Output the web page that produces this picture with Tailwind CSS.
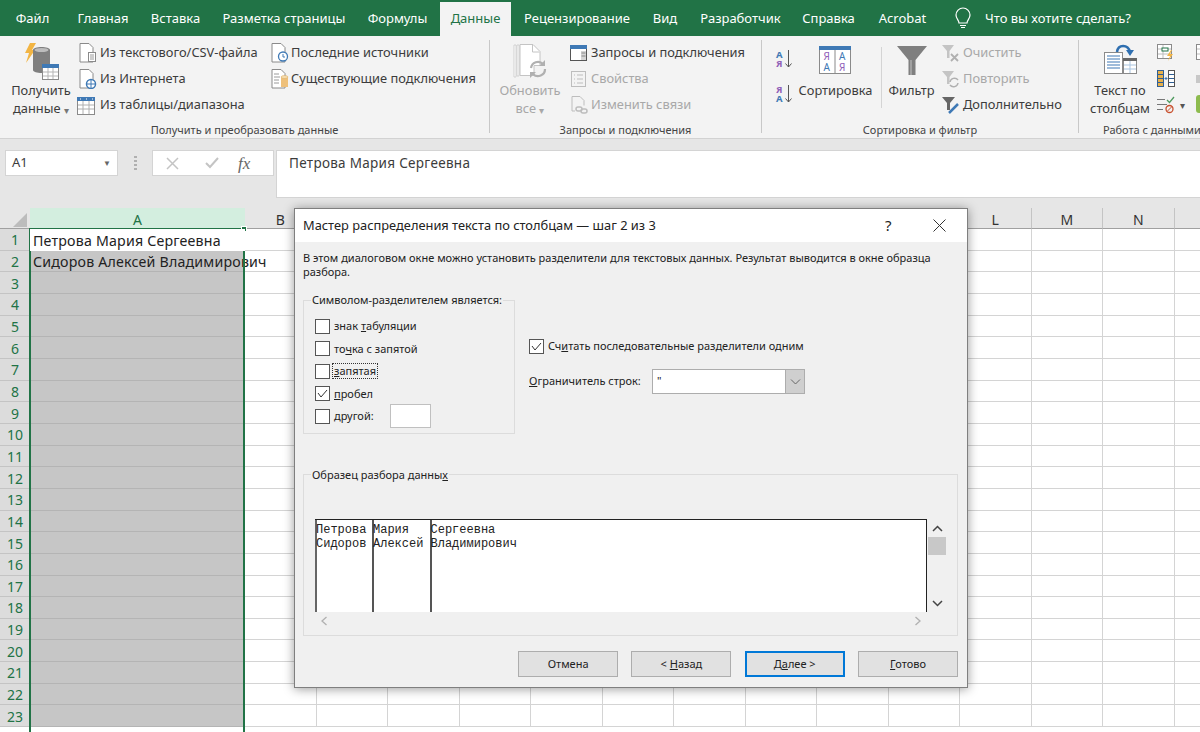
<!DOCTYPE html>
<html lang="ru">
<head>
  <meta charset="UTF-8">
  <title>Excel - Мастер распределения текста</title>
  <script src="https://cdn.jsdelivr.net/npm/@tailwindcss/browser@4"></script>
</head>
<body class="bg-white">
<div class="relative w-[1200px] h-[732px] overflow-hidden bg-white text-[#3c3c3c] [font-family:'Noto_Sans',sans-serif]">

  <!-- Вкладки -->
  <div class="flex h-[36px] pt-[2px] bg-[#217346] text-white text-[13px] items-center">
    <div class="w-[65px] text-center">Файл</div>
    <div class="w-[76px] text-center">Главная</div>
    <div class="w-[69px] text-center">Вставка</div>
    <div class="w-[148px] text-center">Разметка страницы</div>
    <div class="w-[79px] text-center">Формулы</div>
    <div class="ml-[3px] w-[71px] h-[34px] bg-[#f3f3f3] text-[#217346] flex items-center justify-center">Данные</div>
    <div class="w-[132px] text-center">Рецензирование</div>
    <div class="w-[44px] text-center">Вид</div>
    <div class="w-[107px] text-center">Разработчик</div>
    <div class="w-[69px] text-center">Справка</div>
    <div class="w-[79px] text-center">Acrobat</div>
    <svg class="ml-[12px] -mt-[2px] w-[18px] h-[22px]" viewBox="954 6 18 22" fill="none" stroke="#fff" stroke-width="1.2"><path d="M959 22c0-3-3-4-3-8a7 7 0 0 1 14 0c0 4-3 5-3 8z"/><path d="M960 24.500h6M961 26.500h4"/></svg>
    <div class="ml-[13px]">Что вы хотите сделать?</div>
  </div>

  <!-- Лента -->
  <div class="flex h-[103px] bg-[#f3f3f3] border-b border-[#d2d2d2] text-[12.850px] whitespace-nowrap">
    <div class="w-[489px] shrink-0 flex flex-col">
      <div class="flex h-[80px] pt-[4px] box-content">
        <div class="w-[79px] flex flex-col items-center pl-[3px]">
          <svg class="w-[42px] h-[40px] mt-[2px]" viewBox="20 42 42 40">
            <path d="M30 43h6l-4 7h3l-9 13 3-10h-4z" fill="#f2b544"/>
            <path d="M33 50c0-4 17-4 17 0v20c0 4-17 4-17 0z" fill="#7f7f7f"/>
            <ellipse cx="41.500" cy="50" rx="7" ry="2" fill="#bdbdbd"/>
            <rect x="42.500" y="64.500" width="16" height="15" fill="#fff" stroke="#8a8a8a"/>
            <rect x="42" y="64" width="17" height="4" fill="#3f79b5"/>
            <path d="M43 72h15M43 76h15M48 68v11M53 68v11" stroke="#b5b5b5"/>
          </svg>
          <div class="-mt-[1px] leading-[18px] text-center">Получить<br>данные <span class="text-[10px] align-middle text-[#777]">▾</span></div>
        </div>
        <div class="w-[192px] shrink-0">
          <div class="h-[26px] flex items-center">
            <svg class="w-[18px] h-[20px]" viewBox="79 43 18 20" fill="none"><path d="M80 43.500h9l4 4v14.500h-13z" fill="#fff" stroke="#8a8a8a"/><rect x="88.500" y="52.500" width="7" height="9" fill="#fff" stroke="#8a8a8a"/><path d="M90 55h4M90 57h4M90 59h4" stroke="#9a9a9a"/></svg>
            <span class="ml-[3px]">Из текстового/CSV-файла</span>
          </div>
          <div class="h-[26px] flex items-center">
            <svg class="w-[18px] h-[20px]" viewBox="79 69 18 20" fill="none"><path d="M80 69.500h9l4 4v14.500h-13z" fill="#fff" stroke="#8a8a8a"/><circle cx="91" cy="84" r="4.500" fill="#fff" stroke="#3f79b5" stroke-width="1.500"/><path d="M86.500 84h9M91 79.500v9" stroke="#3f79b5"/></svg>
            <span class="ml-[3px]">Из Интернета</span>
          </div>
          <div class="h-[26px] flex items-center">
            <svg class="w-[19px] h-[19px] -ml-[2px] mr-[1px]" viewBox="77 94 19 19" fill="none"><rect x="77.500" y="95.500" width="17" height="17" fill="#fff" stroke="#8a8a8a"/><rect x="77" y="95" width="18" height="4" fill="#3f79b5"/><path d="M78 103h16M78 107h16M83 99v13M89 99v13" stroke="#b0b0b0"/><path d="M80 97h1M86 97h1M92 97h1" stroke="#fff"/></svg>
            <span class="ml-[3px]">Из таблицы/диапазона</span>
          </div>
        </div>
        <div>
          <div class="h-[26px] flex items-center">
            <svg class="w-[18px] h-[20px]" viewBox="271 43 18 20" fill="none"><path d="M272 43.500h9l4 4v14.500h-13z" fill="#fff" stroke="#8a8a8a"/><circle cx="283" cy="56.500" r="4.500" fill="#fff" stroke="#3f79b5" stroke-width="1.300"/><path d="M283 54v3h2" stroke="#3f79b5"/></svg>
            <span class="ml-[2px]">Последние источники</span>
          </div>
          <div class="h-[26px] flex items-center">
            <svg class="w-[18px] h-[20px]" viewBox="271 69 18 20" fill="none"><path d="M272 69.500h9l4 4v14.500h-13z" fill="#fff" stroke="#8a8a8a"/><path d="M274 74h5M274 77h6M274 80h5M274 83h5" stroke="#9a9a9a"/><path d="M281 77h7v10h-7z" fill="#eec07a"/><ellipse cx="284.500" cy="77" rx="3.500" ry="1.500" fill="#f5dcae" stroke="#d9a75a" stroke-width=".5"/></svg>
            <span class="ml-[2px]">Существующие подключения</span>
          </div>
        </div>
      </div>
      <div class="mt-[2px] text-center text-[11px] leading-[16px] text-[#444]">Получить и преобразовать данные</div>
    </div>
    <div class="w-px shrink-0 h-[93px] mt-[4px] bg-[#c8c8c8]"></div>

    <div class="w-[271px] shrink-0 flex flex-col">
      <div class="flex h-[80px] pt-[4px] box-content">
        <div class="w-[80px] flex flex-col items-center text-[#a8a8a8]">
          <svg class="w-[36px] h-[40px] mt-[3px]" viewBox="516 43 36 40" fill="none">
            <path d="M518 45h2v32h-2zM521 45h2v31h-2z" fill="#fff" stroke="#c8c8c8" stroke-width=".8"/>
            <path d="M524 44.500h13l7 7v14h-6v10h-14z" fill="#fff" stroke="#c4c4c4"/>
            <path d="M536.500 45v7h7" stroke="#c4c4c4"/>
            <path d="M535 68a7 7 0 0 1 12-4M549 69a7 7 0 0 1-12 5" stroke="#b0b0b0" stroke-width="2.200"/>
            <path d="M549 60v6h-6zM534 78v-6h6z" fill="#b0b0b0"/>
          </svg>
          <div class="-mt-[2px] leading-[18px] text-center">Обновить<br>все <span class="text-[10px] align-middle">▾</span></div>
        </div>
        <div>
          <div class="h-[26px] flex items-center">
            <svg class="w-[18px] h-[17px]" viewBox="570 44 18 17" fill="none"><rect x="570.500" y="44.500" width="16" height="15" fill="#fff" stroke="#555"/><rect x="570" y="44" width="17" height="4" fill="#3f79b5"/><rect x="581" y="50" width="5" height="9" fill="#d5d5d5"/><path d="M581.500 52h4M581.500 55h4" stroke="#888"/></svg>
            <span class="ml-[3px] text-[#3c3c3c]">Запросы и подключения</span>
          </div>
          <div class="h-[26px] flex items-center text-[#a8a8a8]">
            <svg class="w-[18px] h-[17px]" viewBox="570 70 18 17" fill="none" stroke="#bdbdbd"><rect x="571.500" y="70.500" width="14" height="15"/><path d="M574 74h1M574 78h1M574 82h1M577 74h6M577 78h6M577 82h6"/></svg>
            <span class="ml-[3px]">Свойства</span>
          </div>
          <div class="h-[26px] flex items-center text-[#a8a8a8]">
            <svg class="w-[18px] h-[19px]" viewBox="570 95 18 19" fill="none" stroke="#bdbdbd"><path d="M572 107v-11.500h8l4 4v5"/><path d="M572 107v3h3"/><rect x="576" y="106" width="6" height="4" rx="2" stroke-width="1.500"/><rect x="581" y="108" width="6" height="4" rx="2" stroke-width="1.500"/></svg>
            <span class="ml-[3px]">Изменить связи</span>
          </div>
        </div>
      </div>
      <div class="mt-[2px] text-center text-[11px] leading-[16px] text-[#444]">Запросы и подключения</div>
    </div>
    <div class="w-px shrink-0 h-[93px] mt-[4px] bg-[#c8c8c8]"></div>

    <div class="w-[316px] shrink-0 flex flex-col">
      <div class="flex h-[80px] pt-[4px] box-content">
        <div class="ml-[14px] w-[18px] h-[78px] flex flex-col">
          <svg class="w-[18px] h-[20px] mt-[9px] overflow-visible" viewBox="0 0 18 20" fill="none">
            <text x="0" y="8.500" font-size="9.500" font-weight="700" fill="#3f79b5" font-family="Noto Sans">А</text>
            <text x="0" y="18" font-size="9.500" font-weight="700" fill="#9060b8" font-family="Noto Sans">Я</text>
            <path d="M12.500 1v17M9.500 14.500l3 3.500 3-3.500" stroke="#555"/>
          </svg>
          <svg class="w-[18px] h-[20px] mt-[15px] overflow-visible" viewBox="0 0 18 20" fill="none">
            <text x="0" y="8.500" font-size="9.500" font-weight="700" fill="#9060b8" font-family="Noto Sans">Я</text>
            <text x="0" y="18" font-size="9.500" font-weight="700" fill="#3f79b5" font-family="Noto Sans">А</text>
            <path d="M12.500 1v17M9.500 14.500l3 3.500 3-3.500" stroke="#555"/>
          </svg>
        </div>
        <div class="ml-[4px] w-[75px] flex flex-col items-center">
          <svg class="w-[33px] h-[30px] mt-[6px]" viewBox="0 0 33 30" fill="none">
            <rect x=".5" y=".5" width="31" height="27" fill="#fff" stroke="#8a8a8a"/>
            <rect x="0" y="0" width="32" height="4" fill="#3f79b5"/>
            <path d="M16 4v24" stroke="#8a8a8a"/>
            <text x="4.500" y="14" font-size="10" fill="#9060b8" font-family="Noto Sans">Я</text>
            <text x="4.500" y="25" font-size="10" fill="#3f79b5" font-family="Noto Sans">А</text>
            <text x="20" y="14" font-size="10" fill="#3f79b5" font-family="Noto Sans">А</text>
            <text x="20" y="25" font-size="10" fill="#9060b8" font-family="Noto Sans">Я</text>
          </svg>
          <div class="leading-[18px] mt-[5px]">Сортировка</div>
        </div>
        <div class="ml-[8px] w-px h-[61px] mt-[7px] bg-[#d4d4d4]"></div>
        <div class="ml-[4px] w-[51px] flex flex-col items-center">
          <svg class="w-[30px] h-[30px] mt-[6px]" viewBox="0 0 30 30"><path d="M0 0h30L18.500 14v15h-7V14z" fill="#7f7f7f"/><path d="M14 14v15" stroke="#c4c4c4"/></svg>
          <div class="leading-[18px] mt-[5px]">Фильтр</div>
        </div>
        <div class="ml-[5px]">
          <div class="h-[26px] flex items-center text-[#a8a8a8]">
            <svg class="w-[19px] h-[19px]" viewBox="0 0 19 19" fill="none"><path d="M0 1h12L7.500 7v7H5V7z" fill="#c4c4c4"/><path d="M9 10l7 7M16 10l-7 7" stroke="#b0b0b0" stroke-width="1.800"/></svg>
            <span class="ml-[2px]">Очистить</span>
          </div>
          <div class="h-[26px] flex items-center text-[#a8a8a8]">
            <svg class="w-[19px] h-[19px]" viewBox="0 0 19 19" fill="none"><path d="M0 1h12L7.500 7v7H5V7z" fill="#c4c4c4"/><path d="M8 12a4.500 4.500 0 0 1 8-2M16 13a4.500 4.500 0 0 1-8 2" stroke="#b0b0b0" stroke-width="1.500"/></svg>
            <span class="ml-[2px]">Повторить</span>
          </div>
          <div class="h-[26px] flex items-center">
            <svg class="w-[19px] h-[19px]" viewBox="0 0 19 19" fill="none"><path d="M0 1h13L8 7v7H5V7z" fill="#666"/><path d="M7 17l9-9" stroke="#3f79b5" stroke-width="2.500"/></svg>
            <span class="ml-[2px]">Дополнительно</span>
          </div>
        </div>
      </div>
      <div class="mt-[2px] text-center text-[11px] leading-[16px] text-[#444]">Сортировка и фильтр</div>
    </div>
    <div class="w-px shrink-0 h-[93px] mt-[4px] bg-[#c8c8c8]"></div>

    <div class="w-[170px] shrink-0 flex flex-col">
      <div class="flex h-[80px] pt-[4px] box-content">
        <div class="ml-[6px] w-[70px] flex flex-col items-center">
          <svg class="w-[34px] h-[32px] mt-[4px]" viewBox="1103 44 34 32" fill="none">
            <rect x="1104.500" y="52.500" width="18" height="21" fill="#fff" stroke="#8a8a8a"/>
            <path d="M1107 56h13M1107 59h13M1107 62h13M1107 65h13M1107 68h13" stroke="#3f79b5" stroke-width="1.200"/>
            <rect x="1123.500" y="58.500" width="13" height="15" fill="#fff" stroke="#8a8a8a"/>
            <rect x="1123" y="58" width="14" height="3" fill="#666"/>
            <path d="M1130 61v12M1124 65h12M1124 69h12" stroke="#a9c4df"/>
            <path d="M1117 52c1-8 11-8 13 0" stroke="#2f6fb0" stroke-width="2.500"/>
            <path d="M1126 50h8l-4 6z" fill="#2f6fb0"/>
          </svg>
          <div class="leading-[18px] mt-[5px] text-center">Текст по<br>столбцам</div>
        </div>
        <div class="ml-[2px]">
          <div class="h-[26px] flex items-center">
            <svg class="w-[18px] h-[18px]" viewBox="0 0 18 18" fill="none"><rect x=".5" y=".5" width="14" height="14" fill="#fff" stroke="#8a8a8a"/><path d="M1 5h13M1 10h13M6 1v13" stroke="#bdbdbd"/><rect x="5" y="4" width="6" height="3" fill="#fff" stroke="#217346"/><path d="M14 6l-4 6h3l-2 5 5-7h-3l2-4z" fill="#f2b544"/></svg>
          </div>
          <div class="h-[26px] flex items-center">
            <svg class="w-[18px] h-[18px]" viewBox="0 0 18 18" fill="none"><rect x=".5" y=".5" width="6" height="16" fill="#e8b04a" stroke="#2f5f95"/><rect x="11.500" y=".5" width="6" height="16" fill="#fff" stroke="#555"/><path d="M1 4.500h5M1 8.500h5M1 12.500h5M12 4.500h5M12 8.500h5M12 12.500h5" stroke="#2f5f95"/><path d="M7.500 8.500h3M9 7v3" stroke="#3f79b5"/></svg>
          </div>
          <div class="h-[26px] flex items-center">
            <svg class="w-[18px] h-[18px]" viewBox="0 0 18 18" fill="none"><path d="M0 3.500h8M0 8.500h10M0 13.500h6" stroke="#777" stroke-width="1.200"/><path d="M10 4l2.500 2.500L17 1" stroke="#4f9a5f" stroke-width="1.300"/><circle cx="12.500" cy="13" r="3.500" stroke="#c8502e" stroke-width="1.300"/><path d="M10 15.500l5-5" stroke="#c8502e"/></svg>
            <span class="ml-[5px] text-[10px] text-[#555]">▾</span>
          </div>
        </div>
        <div class="ml-[11px]">
          <div class="h-[26px] flex items-center"><svg class="w-[16px] h-[18px]" viewBox="0 0 16 18" fill="none"><rect x=".5" y=".5" width="14" height="15" fill="#fff" stroke="#8a8a8a"/><path d="M1 5h13M1 10h13" stroke="#bdbdbd"/></svg></div>
          <div class="h-[26px] flex items-center"><svg class="w-[16px] h-[18px]" viewBox="0 0 16 18"><path d="M0 5h10v8H0z" fill="#c8c8c8"/></svg></div>
          <div class="h-[26px] flex items-center"><svg class="w-[16px] h-[20px]" viewBox="0 0 16 20"><rect x="0" y="0" width="14" height="18" rx="3" fill="#8dbb4e"/></svg></div>
        </div>
      </div>
      <div class="mt-[2px] pl-[24px] text-[11px] leading-[16px] text-[#444]">Работа с данными</div>
    </div>
  </div>

  <!-- Строка формул -->
  <div class="flex h-[69px] bg-[#e6e6e6] pt-[11px] text-[13px]">
    <div class="ml-[5px] w-[113px] h-[26px] bg-white border border-[#d4d4d4] flex items-center justify-between pl-[6px] pr-[6px]">
      <span>A1</span><span class="text-[8px] text-[#666]">▼</span>
    </div>
    <div class="w-[34px] h-[26px] flex flex-col items-center justify-center gap-[2px]">
      <i class="w-[3px] h-[2px] bg-[#b0b0b0]"></i><i class="w-[3px] h-[2px] bg-[#b0b0b0]"></i><i class="w-[3px] h-[2px] bg-[#b0b0b0]"></i><i class="w-[3px] h-[2px] bg-[#b0b0b0]"></i>
    </div>
    <div class="w-[122px] h-[26px] bg-white border border-[#d4d4d4] flex items-center">
      <svg class="ml-[13px] w-[13px] h-[13px]" viewBox="0 0 13 13" fill="none" stroke="#c4c4c4" stroke-width="1.500"><path d="M1 1l11 11M12 1L1 12"/></svg>
      <svg class="ml-[26px] w-[14px] h-[12px]" viewBox="0 0 14 12" fill="none" stroke="#c4c4c4" stroke-width="2"><path d="M1 6l4 4 8-9"/></svg>
      <span class="ml-[19px] [font-family:'Liberation_Serif',serif] italic text-[17px] text-[#666] leading-none">fx</span>
    </div>
    <div class="ml-[2px] flex-1 h-[48px] bg-white border-y border-l border-[#d4d4d4] pl-[12px] pt-[2px] leading-[20px] text-[13.500px] tracking-[0.3px]">Петрова Мария Сергеевна</div>
  </div>

  <!-- Лист -->
  <div class="relative">
    <div id="sheet" class="grid grid-cols-[30px_215px_repeat(14,71.500px)] grid-rows-[21px_repeat(23,21.670px)] text-[14.200px] text-[#222]"></div>
    <div class="absolute left-[29px] top-[20px] w-[216px] h-[520px] border-2 border-[#217346]"></div>
    <div class="absolute left-[241px] top-[18px] w-[6px] h-[6px] bg-[#217346] border border-white"></div>
  </div>

  <!-- Окно мастера -->
  <div class="absolute left-[294px] top-[208px] w-[674px] h-[480px] border border-[#7f7f7f] bg-[#f0f0f0] shadow-[0_1px_10px_rgba(0,0,0,0.4)] text-[11px] text-[#222]">
    <div class="relative h-[33px] bg-white flex items-center pl-[8px] text-[12.850px] text-[#222]">
      Мастер распределения текста по столбцам — шаг 2 из 3
      <span class="absolute left-[590px] text-[15px]">?</span>
      <svg class="absolute left-[638px] w-[13px] h-[13px]" viewBox="0 0 13 13" fill="none" stroke="#333"><path d="M.5.5l12 12M12.500.5l-12 12"/></svg>
    </div>
    <div class="px-[8px]">
      <p class="mt-[9px] leading-[14px] whitespace-nowrap">В этом диалоговом окне можно установить разделители для текстовых данных. Результат выводится в окне образца<br>разбора.</p>

      <div class="flex mt-[21px]">
        <div class="relative w-[212px] h-[134px] border border-[#dcdcdc] pt-[14px] pl-[11px]">
          <span class="absolute -top-[8px] left-[7px] bg-[#f0f0f0] px-px leading-[14px] whitespace-nowrap">Символом-разделителем является:</span>
          <div class="h-[22.500px] flex items-center"><i class="w-[15px] h-[15px] border border-[#555] bg-white"></i><span class="ml-[4px]">знак <u>т</u>абуляции</span></div>
          <div class="h-[22.500px] flex items-center"><i class="w-[15px] h-[15px] border border-[#555] bg-white"></i><span class="ml-[4px]">то<u>ч</u>ка с запятой</span></div>
          <div class="h-[22.500px] flex items-center"><i class="w-[15px] h-[15px] border border-[#555] bg-white"></i><span class="ml-[3px] px-px leading-[14px] outline-1 outline-dotted outline-[#333]"><u>з</u>апятая</span></div>
          <div class="h-[22.500px] flex items-center">
            <span class="flex items-center justify-center w-[15px] h-[15px] border border-[#555] bg-white">
              <svg class="w-[11px] h-[9px]" viewBox="0 0 11 9" fill="none" stroke="#333"><path d="M1 4l3 4 6-7"/></svg>
            </span>
            <span class="ml-[4px]"><u>п</u>робел</span>
          </div>
          <div class="h-[22.500px] flex items-center"><i class="w-[15px] h-[15px] border border-[#555] bg-white"></i><span class="ml-[4px] w-[56px]"><u>д</u>ругой:</span><i class="w-[41px] h-[24px] bg-white border border-[#c0c0c0]"></i></div>
        </div>
        <div class="ml-[14px] mt-[36px]">
          <div class="h-[20px] flex items-center">
            <span class="flex items-center justify-center w-[15px] h-[15px] border border-[#555] bg-white">
              <svg class="w-[11px] h-[9px]" viewBox="0 0 11 9" fill="none" stroke="#333"><path d="M1 4l3 4 6-7"/></svg>
            </span>
            <span class="ml-[4px]">Сч<u>и</u>тать последовательные разделители одним</span>
          </div>
          <div class="mt-[13px] flex items-center">
            <span class="w-[123px]"><u>О</u>граничитель строк:</span>
            <div class="w-[153px] h-[25px] bg-white border border-[#adadad] flex items-center justify-between pl-[4px]">
              <span>"</span>
              <span class="w-[19px] h-full bg-[#cfcfcf] border-l border-[#adadad] flex items-center justify-center">
                <svg class="w-[11px] h-[6px]" viewBox="0 0 11 6" fill="none" stroke="#666"><path d="M1 .5l4.500 4.500 4.500-4.500"/></svg>
              </span>
            </div>
          </div>
        </div>
      </div>

      <div class="relative w-[655px] h-[162px] mt-[40px] border border-[#dcdcdc] pt-[44px] pl-[11px]">
        <span class="absolute -top-[7px] left-[7px] bg-[#f0f0f0] px-px leading-[14px]">Образец разбора данны<u>х</u></span>
        <div class="flex">
          <div class="flex w-[612px] h-[93px] bg-white border-t border-r border-[#222] [font-family:'Liberation_Mono',monospace] text-[12px] leading-[14px] pt-0">
            <div class="w-[57px] border-l-2 border-[#666] pt-[3px] whitespace-pre"><div class="-ml-[1px]">Петрова<br>Сидоров</div></div>
            <div class="w-[57.500px] border-l-2 border-[#555] pt-[3px] whitespace-pre"><div class="-ml-[1px]">Мария<br>Алексей</div></div>
            <div class="flex-1 border-l-2 border-[#555] pt-[3px] whitespace-pre"><div class="-ml-[1px]">Сергеевна<br>Владимирович</div></div>
          </div>
          <div class="w-[18px] h-[93px] ml-[1px] flex flex-col items-center">
            <svg class="mt-[6px] w-[11px] h-[7px]" viewBox="0 0 11 7" fill="none" stroke="#444" stroke-width="1.500"><path d="M1 6l4.500-4.500L10 6"/></svg>
            <div class="mt-[5px] w-full h-[18px] bg-[#c8c8c8]"></div>
            <svg class="mt-auto mb-[5px] w-[11px] h-[7px]" viewBox="0 0 11 7" fill="none" stroke="#444" stroke-width="1.500"><path d="M1 1l4.500 4.500L10 1"/></svg>
          </div>
        </div>
        <div class="w-[612px] h-[18px] flex items-center justify-between px-[6px]">
          <svg class="w-[6px] h-[10px]" viewBox="0 0 6 10" fill="none" stroke="#b0b0b0" stroke-width="1.300"><path d="M5.500 1L1 5l4.500 4"/></svg>
          <svg class="w-[6px] h-[10px]" viewBox="0 0 6 10" fill="none" stroke="#b0b0b0" stroke-width="1.300"><path d="M.5 1L5 5 .5 9"/></svg>
        </div>
      </div>

      <div class="mt-[15px] flex justify-end gap-[13.300px] w-[655px]">
        <button class="w-[100px] h-[26px] bg-[#e1e1e1] border border-[#adadad]">Отмена</button>
        <button class="w-[100px] h-[26px] bg-[#e1e1e1] border border-[#adadad]">&lt; <u>Н</u>азад</button>
        <button class="w-[100px] h-[26px] bg-[#e1e1e1] border-2 border-[#0078d7]">Д<u>а</u>лее &gt;</button>
        <button class="w-[100px] h-[26px] bg-[#e1e1e1] border border-[#adadad]"><u>Г</u>отово</button>
      </div>
    </div>
  </div>
</div>

<script>
  // Сетка листа: заголовки столбцов и 23 строки; столбцы C-K закрыты окном мастера
  const sheet = document.getElementById('sheet');
  const letters = ['A','B','','','','','','','','','','L','M','N',''];
  let html = '<div class="bg-[#e6e6e6] border-b border-[#a0a0a0] relative"><svg class="absolute left-[13px] top-[5px] w-[14px] h-[14px]" viewBox="0 0 14 14"><path d="M14 0v14H0z" fill="#bcbcbc"/></svg></div>';
  letters.forEach((l, i) => {
    if (i === 0) {
      html += '<div class="bg-[#d3eedf] border-b border-[#217346] text-[#217346] text-[14px] pt-[2px] flex items-center justify-center">A</div>';
    } else {
      html += '<div class="bg-[#e6e6e6] border-b border-r border-b-[#a0a0a0] border-r-[#c4c4c4] text-[#333] text-[14px] pt-[2px] flex items-center justify-center">' + l + '</div>';
    }
  });
  for (let r = 1; r <= 23; r++) {
    html += '<div class="bg-[#dcdcdc] border-b border-[#c4c4c4] text-[#217346] text-[14px] pt-[1px] flex items-center justify-center">' + r + '</div>';
    if (r === 1) {
      html += '<div class="bg-white pl-[3px] pt-[1px] leading-[21px] whitespace-nowrap tracking-[0.2px] relative z-10">Петрова Мария Сергеевна</div>';
    } else if (r === 2) {
      html += '<div class="bg-[#c6c6c6] border-b border-[#b4b4b4] pl-[3px] pt-[1px] leading-[20px] whitespace-nowrap tracking-[0.2px]">Сидоров Алексей Владимирович</div>';
    } else {
      html += '<div class="bg-[#c6c6c6] border-b border-[#b4b4b4]"></div>';
    }
    for (let c = 1; c < letters.length; c++) {
      html += '<div class="border-b border-r border-[#d4d4d4]"></div>';
    }
  }
  sheet.innerHTML = html;
</script>
</body>
</html>
